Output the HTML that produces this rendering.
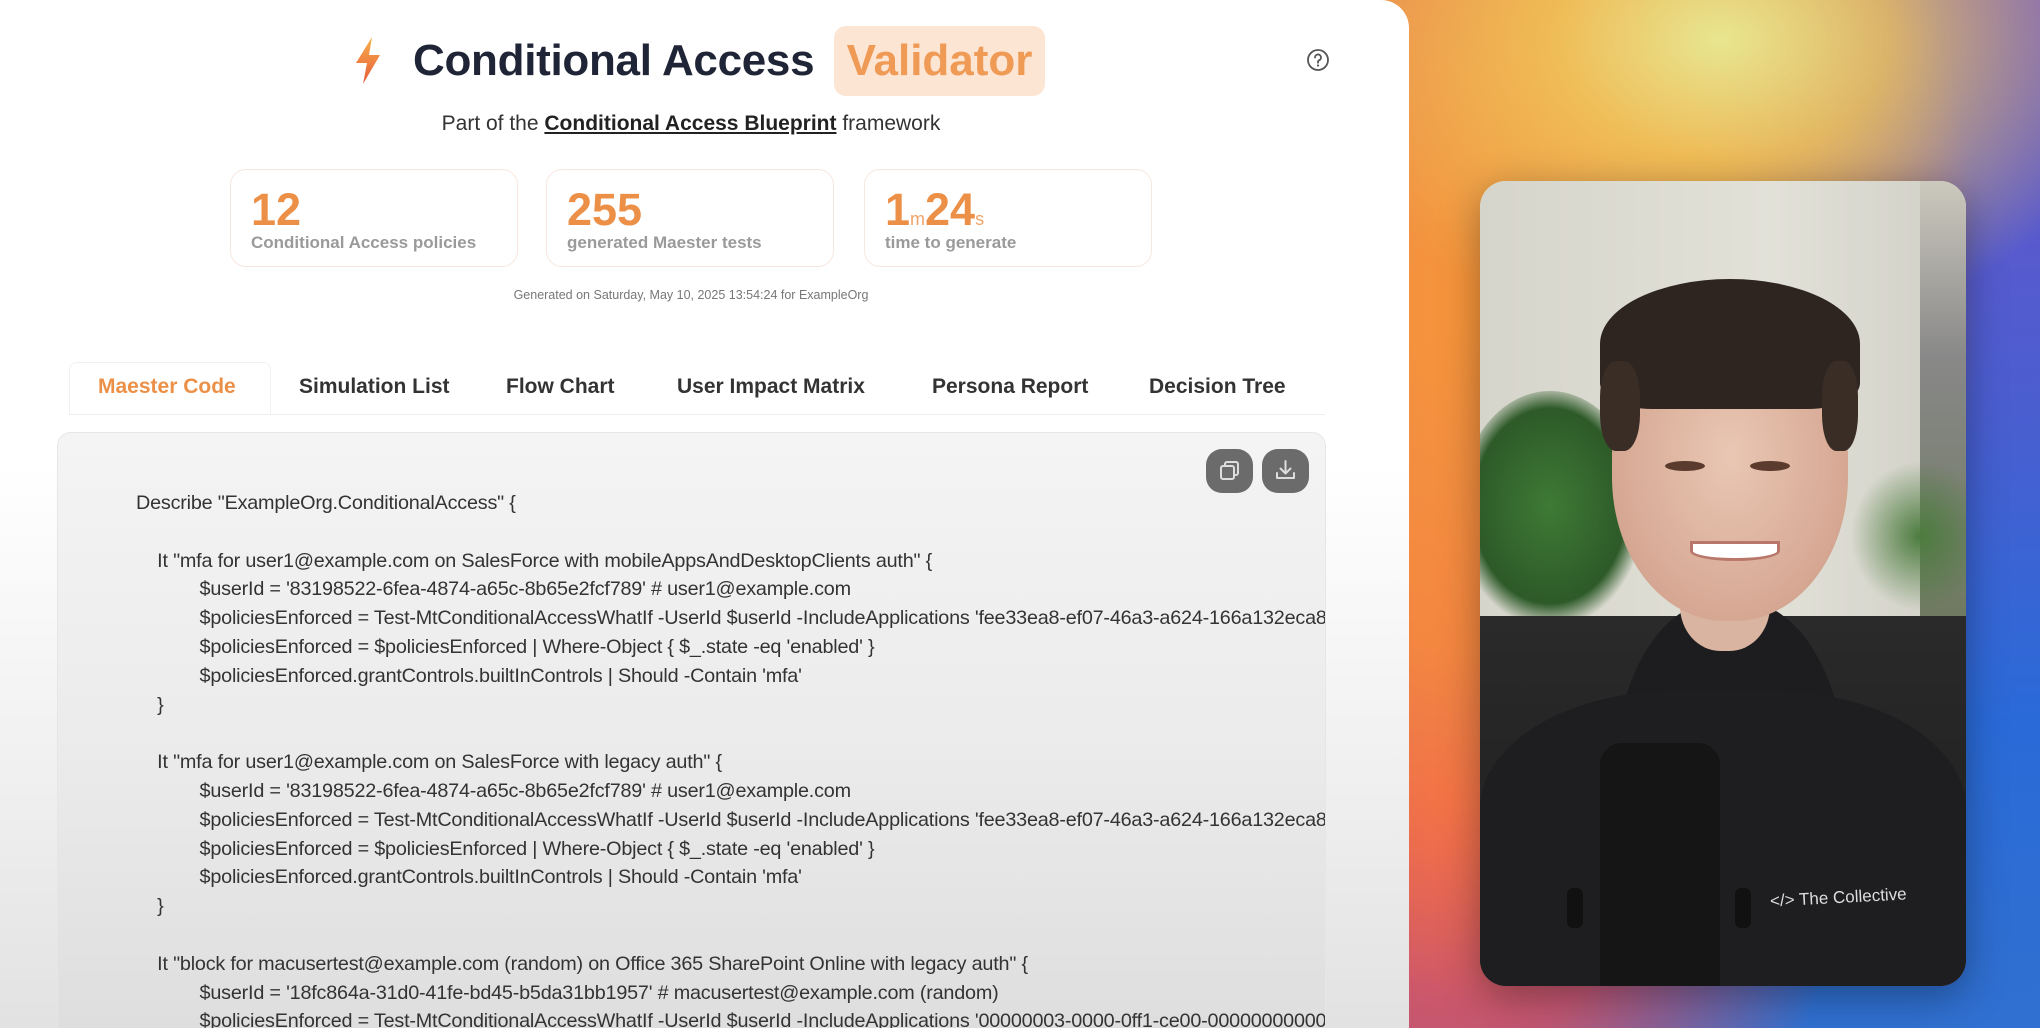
<!DOCTYPE html>
<html><head><meta charset="utf-8">
<style>
*{margin:0;padding:0;box-sizing:border-box}
html,body{width:2040px;height:1028px;overflow:hidden}
body{position:relative;font-family:"Liberation Sans",sans-serif;
background:
radial-gradient(ellipse 420px 300px at 1720px 40px,#e8e690 0%,rgba(240,200,90,0.8) 40%,rgba(0,0,0,0) 100%),
radial-gradient(ellipse 500px 700px at 1480px 300px,#f8963a 0%,rgba(248,140,60,0.9) 50%,rgba(0,0,0,0) 100%),
radial-gradient(ellipse 400px 500px at 1450px 800px,#f05a50 0%,rgba(230,80,90,0.8) 50%,rgba(0,0,0,0) 100%),
linear-gradient(180deg,#6b55c8 0%,#4a5ed0 40%,#2a6ad8 70%,#3070d0 100%);}
#panel{position:absolute;left:0;top:0;width:1409px;height:1028px;border-top-right-radius:28px;
background:linear-gradient(180deg,#fff 0%,#fff 45%,#f0f0f0 75%,#e2e2e2 100%);overflow:hidden}
.title{position:absolute;top:26px;left:413px;font-size:44px;font-weight:bold;color:#1f2536;line-height:70px;letter-spacing:-0.3px}
.val{position:absolute;left:834px;top:26px;width:211px;height:70px;background:#fde5d4;border-radius:12px;color:#ef9a55;font-size:44px;font-weight:bold;line-height:70px;text-align:center}
.sub{position:absolute;top:112px;left:0;width:1382px;text-align:center;font-size:21px;color:#333}
.sub b{text-decoration:underline;color:#222}
.card{position:absolute;top:169px;width:288px;height:98px;border:1.5px solid #f7e8df;border-radius:16px;background:#fff}
.num{position:absolute;left:20px;top:14px;font-size:45px;font-weight:bold;color:#ec9048}
.num small{font-size:18px;font-weight:normal;color:#f0a46a}
.lab{position:absolute;left:20px;top:63px;font-size:17px;font-weight:bold;color:#9a9a9a}
.gen{position:absolute;top:288px;left:0;width:1382px;text-align:center;font-size:12.5px;color:#777}
.tab{position:absolute;top:375px;font-size:21px;font-weight:bold;color:#333}
.tabact{position:absolute;left:69px;top:362px;width:202px;height:53px;border:1px solid #f1f1f1;border-bottom:none;border-radius:8px 8px 0 0;background:#fff}
.line{position:absolute;left:69px;top:414px;width:1256px;height:1px;background:#eee}
.code{position:absolute;left:57px;top:432px;width:1269px;height:640px;border-radius:14px;border:1px solid #e6e6e6;background:linear-gradient(180deg,#f4f4f4 0%,#ebebeb 50%,#dcdcdc 100%);overflow:hidden}
.btn{position:absolute;top:16px;width:47px;height:44px;border-radius:16px;background:#6b6b6b}
pre{position:absolute;left:78px;top:56px;font-family:"Liberation Sans",sans-serif;font-size:19.8px;line-height:28.8px;color:#333;white-space:pre;letter-spacing:-0.2px}
#vid{position:absolute;left:1480px;top:181px;width:486px;height:805px;border-radius:26px;overflow:hidden;background:#dcdad0;box-shadow:0 10px 40px rgba(0,0,0,0.35)}
#vid div{position:absolute}
</style></head><body>
<div id="panel">
<svg style="position:absolute;left:352px;top:36px" width="32" height="50" viewBox="0 0 32 50"><defs><linearGradient id="g" x1="0" y1="0" x2="0" y2="1"><stop offset="0" stop-color="#f7b04a"/><stop offset="1" stop-color="#e85a3a"/></linearGradient></defs><path d="M20 1 L4 27 L15 27 L11 48 L28 19 L17 19 Z" fill="url(#g)"/></svg>
<div class="title">Conditional Access</div>
<div class="val">Validator</div>
<svg style="position:absolute;left:1306px;top:48px" width="24" height="24" viewBox="0 0 24 24"><circle cx="12" cy="12" r="10" fill="none" stroke="#555" stroke-width="1.8"/><path d="M9 9.5a3 3 0 1 1 4.2 2.7c-.8.4-1.2 1-1.2 1.9v.6" fill="none" stroke="#555" stroke-width="1.8" stroke-linecap="round"/><circle cx="12" cy="17.5" r="1.1" fill="#555"/></svg>
<div class="sub">Part of the <b>Conditional Access Blueprint</b> framework</div>
<div class="card" style="left:230px"><div class="num">12</div><div class="lab">Conditional Access policies</div></div>
<div class="card" style="left:546px"><div class="num">255</div><div class="lab">generated Maester tests</div></div>
<div class="card" style="left:864px"><div class="num">1<small>m</small>24<small>s</small></div><div class="lab">time to generate</div></div>
<div class="gen">Generated on Saturday, May 10, 2025 13:54:24 for ExampleOrg</div>
<div class="tabact"></div>
<div class="line"></div>
<div class="tab" style="left:98px;color:#ec9048">Maester Code</div>
<div class="tab" style="left:299px">Simulation List</div>
<div class="tab" style="left:506px">Flow Chart</div>
<div class="tab" style="left:677px">User Impact Matrix</div>
<div class="tab" style="left:932px">Persona Report</div>
<div class="tab" style="left:1149px">Decision Tree</div>
<div class="code">
<div class="btn" style="left:1148px"><svg width="47" height="44" viewBox="0 0 47 44"><rect x="19" y="13" width="13" height="13" rx="2" fill="none" stroke="#ddd" stroke-width="2"/><rect x="15" y="17" width="13" height="13" rx="2" fill="#6b6b6b" stroke="#ddd" stroke-width="2"/></svg></div>
<div class="btn" style="left:1204px"><svg width="47" height="44" viewBox="0 0 47 44"><path d="M23.5 12v12M18.5 19.5l5 5 5-5M15 24v5h17v-5" fill="none" stroke="#ddd" stroke-width="2" stroke-linecap="round" stroke-linejoin="round"/></svg></div>
<pre>Describe "ExampleOrg.ConditionalAccess" {

    It "mfa for user1@example.com on SalesForce with mobileAppsAndDesktopClients auth" {
            $userId = '83198522-6fea-4874-a65c-8b65e2fcf789' # user1@example.com
            $policiesEnforced = Test-MtConditionalAccessWhatIf -UserId $userId -IncludeApplications 'fee33ea8-ef07-46a3-a624-166a132eca8c' -ClientAppType
            $policiesEnforced = $policiesEnforced | Where-Object { $_.state -eq 'enabled' }
            $policiesEnforced.grantControls.builtInControls | Should -Contain 'mfa'
    }

    It "mfa for user1@example.com on SalesForce with legacy auth" {
            $userId = '83198522-6fea-4874-a65c-8b65e2fcf789' # user1@example.com
            $policiesEnforced = Test-MtConditionalAccessWhatIf -UserId $userId -IncludeApplications 'fee33ea8-ef07-46a3-a624-166a132eca8c' -ClientAppType
            $policiesEnforced = $policiesEnforced | Where-Object { $_.state -eq 'enabled' }
            $policiesEnforced.grantControls.builtInControls | Should -Contain 'mfa'
    }

    It "block for macusertest@example.com (random) on Office 365 SharePoint Online with legacy auth" {
            $userId = '18fc864a-31d0-41fe-bd45-b5da31bb1957' # macusertest@example.com (random)
            $policiesEnforced = Test-MtConditionalAccessWhatIf -UserId $userId -IncludeApplications '00000003-0000-0ff1-ce00-000000000000' -ClientAppType</pre>
</div>
</div>
<div id="vid">
<div style="left:0;top:0;width:486px;height:440px;background:linear-gradient(90deg,#d6d5cb,#e2e1d8 60%,#d0cfc6)"></div>
<div style="left:440px;top:0;width:46px;height:440px;background:linear-gradient(180deg,#ccc9be,#888 40%,#6f7a60)"></div>
<div style="left:-20px;top:210px;width:180px;height:230px;border-radius:50% 50% 30% 30%;background:radial-gradient(ellipse at 50% 50%,#3f7a36,#2d5a28 60%,rgba(45,90,40,0) 75%)"></div>
<div style="left:370px;top:280px;width:140px;height:150px;border-radius:50%;background:radial-gradient(ellipse at 50% 50%,#4c7c3e,rgba(60,100,50,0) 70%)"></div>
<div style="left:0;top:435px;width:486px;height:370px;background:linear-gradient(180deg,#2a2a2a,#1c1c1e)"></div>
<div style="left:135px;top:420px;width:230px;height:385px;border-radius:45% 45% 0 0;background:#1d1d1f"></div>
<div style="left:0;top:510px;width:486px;height:295px;border-radius:40% 40% 0 0;background:#1e1e20"></div>
<div style="left:200px;top:370px;width:90px;height:100px;background:#d9b4a0;border-radius:0 0 45% 45%"></div>
<div style="left:132px;top:140px;width:236px;height:300px;border-radius:45% 45% 48% 48%;background:radial-gradient(ellipse at 50% 45%,#e9c7b4,#d6a893 70%,#c2917c)"></div>
<div style="left:120px;top:98px;width:260px;height:130px;border-radius:50% 50% 20% 20%;background:#2f2520"></div>
<div style="left:120px;top:180px;width:40px;height:90px;border-radius:40%;background:#3a2d26"></div>
<div style="left:342px;top:180px;width:36px;height:90px;border-radius:40%;background:#3a2d26"></div>
<div style="left:185px;top:280px;width:40px;height:10px;border-radius:50%;background:#5a3b2e"></div>
<div style="left:270px;top:280px;width:40px;height:10px;border-radius:50%;background:#5a3b2e"></div>
<div style="left:210px;top:360px;width:90px;height:20px;border-radius:0 0 50% 50%;background:#fff;border:3px solid #b9766a"></div>
<div style="left:120px;top:562px;width:120px;height:250px;border-radius:22px 22px 0 0;background:#151515"></div>
<div style="left:87px;top:707px;width:16px;height:40px;border-radius:6px;background:#111"></div>
<div style="left:255px;top:707px;width:16px;height:40px;border-radius:6px;background:#111"></div>
<div style="left:290px;top:707px;color:#ddd;font-size:17px;font-family:'Liberation Sans',sans-serif;transform:rotate(-3deg)">&lt;/&gt; The Collective</div>
</div>
</body></html>
